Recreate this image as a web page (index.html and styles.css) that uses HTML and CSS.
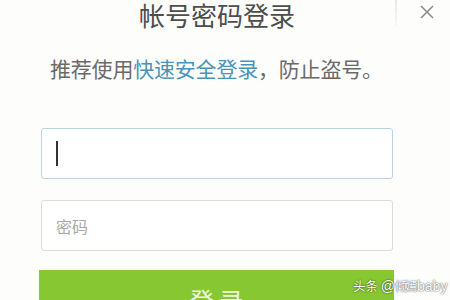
FILE: index.html
```html
<!DOCTYPE html>
<html lang="zh-CN">
<head>
<meta charset="utf-8">
<link rel="stylesheet" href="styles.css">
</head>
<body>
<div class="page">
  <div class="edge"></div>
  <div class="close">
    <svg width="16" height="16" viewBox="0 0 16 16"><path d="M2 2L14 14M14 2L2 14" stroke="#8a8a8a" stroke-width="1.5" fill="none"/></svg>
  </div>
  <main class="form">
    <h1 class="title">帐号密码登录</h1>
    <p class="tip">推荐使用<span class="link">快速安全登录</span>，防止盗号。</p>
    <div class="field field-active"><span class="caret"></span></div>
    <div class="field"><span class="placeholder">密码</span></div>
    <div class="btn">登 录</div>
  </main>
  <div class="mark">头条 <span class="mark-latin">@</span><span class="mark-name">倾嫣</span><span class="mark-latin">baby</span></div>
</div>
</body>
</html>
```
FILE: styles.css
```css
html, body {
  margin: 0;
  padding: 0;
  background: #fdfdfc;
  font-family: "Noto Sans CJK SC", "Noto Sans", sans-serif;
}
.page {
  position: relative;
  width: 450px;
  height: 300px;
  overflow: hidden;
}
.edge {
  position: absolute;
  left: 395px;
  top: 0;
  width: 2px;
  height: 26px;
  background: linear-gradient(#e8e8e8, #f8f8f8);
}
.close {
  position: absolute;
  left: 419px;
  top: 4px;
  width: 16px;
  height: 16px;
}
.close svg { display: block; }
.form {
  width: 352px;
  margin-left: 41px;
  display: flex;
  flex-direction: column;
}
.title {
  margin: 0;
  font-size: 26px;
  font-weight: 400;
  line-height: 30px;
  color: #4d4d4d;
  text-align: center;
}
.tip {
  margin: 26px 0 0;
  padding-left: 9px;
  font-size: 21px;
  line-height: 24px;
  color: #6a6a6a;
  letter-spacing: -0.2px;
  white-space: nowrap;
}
.link { color: #4a93b8; }
.field {
  margin-top: 21px;
  box-sizing: border-box;
  height: 51px;
  border: 1px solid #dcdcdc;
  border-radius: 3px;
  background: #fff;
  display: flex;
  align-items: center;
  padding-left: 14px;
}
.field-active {
  margin-top: 48px;
  border-color: #b9d3df;
}
.caret {
  width: 2px;
  height: 25px;
  background: #333;
}
.placeholder {
  font-size: 16px;
  color: #a8a8a8;
}
.btn {
  margin-top: 19px;
  margin-left: -2px;
  width: 355px;
  height: 50px;
  background: #86c732;
  color: #eef7e2;
  font-size: 24px;
  text-align: center;
  line-height: 56px;
  padding-top: 2px;
}
.mark {
  position: absolute;
  left: 353px;
  top: 276px;
  font-size: 12.5px;
  color: #fff;
  text-shadow: 0 0 2px rgba(0,0,0,0.55), 0 0 1px rgba(0,0,0,0.5);
  white-space: nowrap;
}
.mark-latin {
  font-family: "Liberation Sans", sans-serif;
  font-size: 14px;
}
.mark-name {
  display: inline-block;
  font-size: 12px;
  letter-spacing: -2px;
  margin-right: 2px;
}
```
